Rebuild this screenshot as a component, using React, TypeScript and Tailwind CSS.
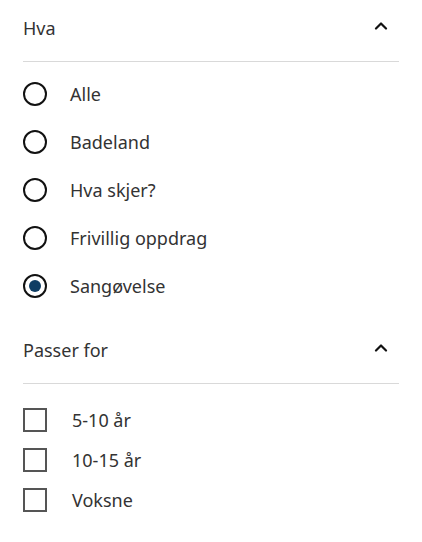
import React from 'react';

const font = { fontFamily: '"Noto Sans", "Open Sans", sans-serif' };

function Chevron() {
  return (
    <svg width="14" height="9" viewBox="0 0 14 9" className="mb-[6px] mr-[11px]" aria-hidden>
      <path d="M2 7.5 L7 2.5 L12 7.5" fill="none" stroke="#111" strokeWidth="2.2" strokeLinecap="round" strokeLinejoin="round" />
    </svg>
  );
}

function SectionHeader({ title }: { title: string }) {
  return (
    <div className="flex h-[62px] items-center justify-between border-b border-[#d9d9d9] pb-[4px]">
      <span className="text-[18px] text-[#333333]">{title}</span>
      <Chevron />
    </div>
  );
}

const options = ['Alle', 'Badeland', 'Hva skjer?', 'Frivillig oppdrag', 'Sangøvelse'];
const ages = ['5-10 år', '10-15 år', 'Voksne'];

export default function App() {
  const selected = 'Sangøvelse';
  return (
    <div className="min-h-screen bg-white px-[23px] pr-[23px]" style={font}>
      <SectionHeader title="Hva" />
      <div className="mt-[8px] flex flex-col">
        {options.map((o) => (
          <label key={o} className="flex h-[48px] items-center gap-[23px]">
            <span className="flex h-[24px] w-[24px] items-center justify-center rounded-full border-2 border-[#111]">
              {o === selected && <span className="h-[12px] w-[12px] rounded-full bg-[#0f3d63]" />}
            </span>
            <span className="text-[18px] text-[#333333]">{o}</span>
          </label>
        ))}
      </div>
      <div className="mt-[12px]">
        <SectionHeader title="Passer for" />
      </div>
      <div className="mt-[16px] flex flex-col">
        {ages.map((a) => (
          <label key={a} className="flex h-[40px] items-center gap-[25px]">
            <span className="h-[24px] w-[24px] border-2 border-[#555555]" />
            <span className="text-[18px] text-[#333333]">{a}</span>
          </label>
        ))}
      </div>
    </div>
  );
}
